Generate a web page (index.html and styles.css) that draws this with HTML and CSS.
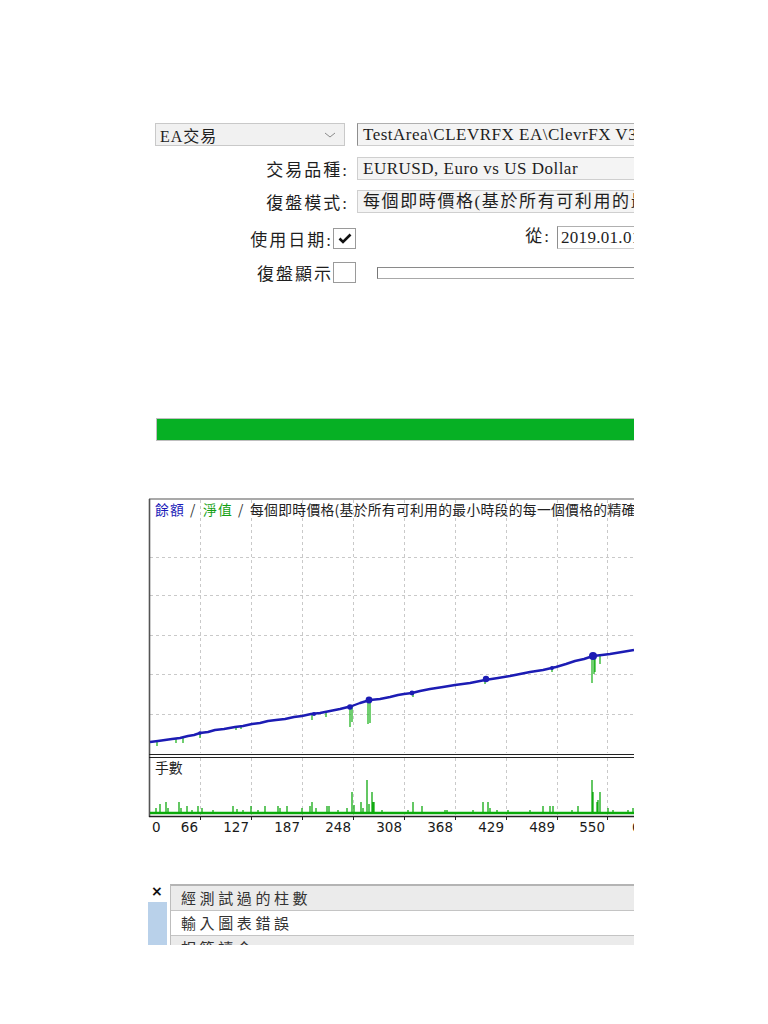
FILE: index.html
```html
<!DOCTYPE html>
<html lang="zh-Hant">
<head>
<meta charset="utf-8">
<title>策略測試</title>
<link rel="stylesheet" href="styles.css">
</head>
<body>
<div class="wrap">
  <div class="row r1">
    <div class="select"><span>EA交易</span>
      <svg class="chev" width="12" height="6" viewBox="0 0 12 6"><polyline points="1,1 6,5 11,1" fill="none" stroke="#8a8a8a" stroke-width="1"/></svg>
    </div>
    <div class="field sunken">TestArea\CLEVRFX EA\ClevrFX V3</div>
  </div>
  <div class="row r2">
    <div class="label">交易品種:</div>
    <div class="field">EURUSD, Euro vs US Dollar</div>
  </div>
  <div class="row r3">
    <div class="label">復盤模式:</div>
    <div class="field cjk">每個即時價格(基於所有可利用的最小時段的每一個價格的精確方法)</div>
  </div>
  <div class="row r4">
    <div class="label short">使用日期:</div>
    <div class="check"><svg width="14" height="11" viewBox="0 0 14 11"><polyline points="1.5,5.5 5,9 12.5,1.5" fill="none" stroke="#111" stroke-width="2.6"/></svg></div>
    <div class="from">從:</div>
    <div class="field date sunken">2019.01.01</div>
  </div>
  <div class="row r5">
    <div class="label short">復盤顯示</div>
    <div class="check"></div>
    <div class="track"></div>
  </div>

  <div class="greenbar"></div>

  <svg class="chart" width="486" height="340" viewBox="0 0 486 340">
    <g class="grid" stroke="#c9c9c9" stroke-width="1" stroke-dasharray="3,3">
      <path d="M52.5 2V255M103.5 2V255M154.5 2V255M205.5 2V255M256.5 2V255M307.5 2V255M358.5 2V255M409.5 2V255M459.5 2V255"/>
      <path d="M52.5 260V317M103.5 260V317M154.5 260V317M205.5 260V317M256.5 260V317M307.5 260V317M358.5 260V317M409.5 260V317M459.5 260V317"/>
      <path d="M2 59.5H486M2 97.5H486M2 137.5H486M2 176.5H486M2 216.5H486"/>
    </g>
    <line x1="1" y1="1" x2="486" y2="1" stroke="#8c8c8c" stroke-width="1.4"/>
    <line x1="1.5" y1="1" x2="1.5" y2="319" stroke="#555" stroke-width="1.6"/>
    <line x1="1" y1="256.5" x2="486" y2="256.5" stroke="#222" stroke-width="1.2"/>
    <line x1="1" y1="259.5" x2="486" y2="259.5" stroke="#222" stroke-width="1.2"/>

    <text y="17" class="legend"><tspan x="7" fill="#1c1cb8" class="wide">餘額</tspan><tspan x="42" fill="#333">/</tspan><tspan x="55" fill="#12a012" class="wide">淨值</tspan><tspan x="90" fill="#333">/</tspan><tspan x="102" fill="#222" class="main">每個即時價格(基於所有可利用的最小時段的每一個價格的精確方法)</tspan></text>

    <path d="M9 243V248M28 241V245M35 239V245M52 235V240M164 216V222M178 213V219M202 209V229M204 208V224M220 203V226M222 202V225M265 195V199M337 182V186M404 170V174M444 158V185M446 158V176M447 160V174M452 158V166M88 229V232M93 228V231" stroke="#25b525" stroke-width="1.3" fill="none"/>
    <polyline fill="none" stroke="#1c1cb4" stroke-width="2.4" stroke-linejoin="round"
      points="2,244 10,243 17,242 24,241 32,240 40,238 46,237 52,235 60,234 67,232 76,231 87,229 95,228 104,226 112,225 120,223 128,222 137,221 146,219 154,218 163,216 172,215 182,213 192,211 200,209 204,208 212,205 222,202 232,201 242,199 250,197 256,196 264,195 272,193 282,191 295,189 307,187 322,185 337,182 350,180 362,178 372,176 382,174 395,172 408,169 418,166 427,163 436,161 445,158 454,157 462,156 474,154 486,152"/>
    <g fill="#1c1cb4">
      <circle cx="202" cy="209" r="2.8"/>
      <circle cx="221" cy="202" r="3.4"/>
      <circle cx="264" cy="195" r="2.4"/>
      <circle cx="338" cy="181" r="3.2"/>
      <circle cx="445" cy="158" r="4"/>
      <circle cx="404" cy="170" r="2"/>
      <circle cx="166" cy="216" r="2"/>
      <circle cx="52" cy="235" r="1.8"/>
    </g>

    <text x="7" y="275" class="legend" fill="#222">手數</text>

    <path d="M8 315V310M12 315V306M18 315V304M20 315V310M31 315V304M33 315V310M39 315V308M44 315V312M50 315V308M54 315V310M65 315V312M85 315V308M89 315V311M95 315V312M103 315V308M110 315V312M117 315V308M130 315V308M132 315V310M139 315V308M154 315V310M162 315V308M164 315V304M168 315V310M179 315V308M181 315V308M190 315V312M199 315V310M204 315V294M206 315V307M213 315V304M215 315V310M219 315V282M221 315V306M224 315V294M225 315V304M226 315V304M234 315V312M260 315V312M265 315V304M274 315V308M297 315V312M299 315V312M325 315V312M335 315V304M340 315V304M342 315V310M349 315V312M360 315V312M382 315V312M395 315V308M402 315V308M405 315V308M424 315V312M430 315V308M444 315V282M445 315V294M449 315V304M450 315V302M452 315V294M460 315V310M465 315V312M480 315V312M485 315V310" stroke="#11aa11" stroke-width="1.3" fill="none"/>
    <line x1="2" y1="315" x2="486" y2="315" stroke="#0aaa0a" stroke-width="2.6"/>
    <line x1="1" y1="318.5" x2="486" y2="318.5" stroke="#222" stroke-width="1.4"/>
    <path d="M52.5 318V322M103.5 318V322M154.5 318V322M205.5 318V322M256.5 318V322M307.5 318V322M358.5 318V322M409.5 318V322M459.5 318V322" stroke="#222" stroke-width="1"/>

    <g class="axis" fill="#1a1a1a">
      <text x="4" y="334">0</text>
      <text x="50" y="334" text-anchor="end">66</text>
      <text x="101" y="334" text-anchor="end">127</text>
      <text x="152" y="334" text-anchor="end">187</text>
      <text x="203" y="334" text-anchor="end">248</text>
      <text x="254" y="334" text-anchor="end">308</text>
      <text x="305" y="334" text-anchor="end">368</text>
      <text x="356" y="334" text-anchor="end">429</text>
      <text x="407" y="334" text-anchor="end">489</text>
      <text x="457" y="334" text-anchor="end">550</text>
      <text x="484" y="334">611</text>
    </g>
  </svg>

  <div class="panel">
    <div class="side">
      <div class="close">×</div>
      <div class="strip"></div>
    </div>
    <div class="rows">
      <div class="item gray">經測試過的柱數</div>
      <div class="item">輸入圖表錯誤</div>
      <div class="item gray">相符讀令</div>
    </div>
  </div>
</div>
</body>
</html>
```

FILE: styles.css
```css
html, body {
  margin: 0;
  padding: 0;
  background: #ffffff;
}

.wrap {
  margin-left: 148px;
  width: 486px;
  overflow: hidden;
  padding-top: 123px;
  font-family: "Liberation Serif", "Noto Sans CJK TC", serif;
  color: #1e1e1e;
}

.row {
  display: flex;
  align-items: center;
  white-space: nowrap;
}

.r1 { height: 23px; }
.r2 { height: 23px; margin-top: 11px; }
.r3 { height: 23px; margin-top: 10px; }
.r4 { height: 24px; margin-top: 13px; }
.r5 { height: 21px; margin-top: 12px; }

.select {
  flex: none;
  margin-left: 7px;
  width: 190px;
  height: 23px;
  box-sizing: border-box;
  border: 1px solid #c9c9c9;
  background: #f1f1f1;
  display: flex;
  align-items: center;
  justify-content: space-between;
  padding: 0 8px 0 4px;
  font-size: 16px;
  letter-spacing: 1px;
}

.chev { display: block; }

.field {
  flex: none;
  margin-left: 8px;
  width: 320px;
  height: 23px;
  box-sizing: border-box;
  border: 1px solid #cfcfcf;
  background: #f4f4f4;
  padding-left: 5px;
  font-size: 17px;
  line-height: 21px;
  letter-spacing: 0.5px;
  overflow: hidden;
}

.field.cjk {
  letter-spacing: 1.6px;
}

.r1 .field { margin-left: 12px; }

.sunken {
  border-left-color: #8e8e8e;
  border-top-color: #b0b0b0;
}

.label {
  flex: none;
  width: 201px;
  text-align: right;
  font-size: 17px;
  letter-spacing: 2px;
}

.label.short {
  width: 185px;
}

.check {
  flex: none;
  width: 23px;
  height: 21px;
  box-sizing: border-box;
  border: 1px solid #9a9a9a;
  background: #ffffff;
  display: flex;
  align-items: center;
  justify-content: center;
}

.from {
  flex: none;
  width: 195px;
  text-align: right;
  font-size: 17px;
  letter-spacing: 2px;
  align-self: flex-start;
  line-height: 22px;
}

.field.date {
  margin-left: 6px;
  width: 90px;
  background: #ffffff;
  padding-left: 3px;
  font-size: 17px;
  letter-spacing: 0.3px;
  align-self: flex-start;
}

.track {
  flex: none;
  margin-left: 21px;
  width: 300px;
  height: 12px;
  box-sizing: border-box;
  border: 1px solid #a8a8a8;
  border-left-color: #777;
  border-top-color: #8a8a8a;
  background: #ffffff;
}

.greenbar {
  margin: 135px 0 0 8px;
  width: 490px;
  height: 23px;
  box-sizing: border-box;
  border: 1px solid #bfbfbf;
  background: #06b024;
}

.chart {
  display: block;
  margin-top: 57px;
}

.legend {
  font-family: "Noto Sans CJK TC", "DejaVu Sans", sans-serif;
  font-size: 13.8px;
}

.legend .wide {
  letter-spacing: 1.2px;
}

.legend .main {
  letter-spacing: 0.3px;
}

.axis text {
  font-family: "DejaVu Sans", sans-serif;
  font-size: 13.5px;
}

.panel {
  margin-top: 46px;
  height: 61px;
  overflow: hidden;
  display: flex;
  font-family: "Noto Sans CJK TC", "DejaVu Sans", sans-serif;
}

.side {
  flex: none;
  width: 22px;
  display: flex;
  flex-direction: column;
}

.close {
  height: 18px;
  padding-left: 3px;
  font-family: "DejaVu Sans", sans-serif;
  font-weight: bold;
  font-size: 14px;
  line-height: 14px;
  color: #111;
}

.strip {
  width: 19px;
  flex: 1;
  background: #b9d1ea;
}

.rows {
  flex: 1;
  border-left: 1px solid #bdbdbd;
  border-top: 2px solid #b4b4b4;
}

.item {
  height: 24px;
  border-bottom: 1px solid #c4c4c4;
  padding-left: 10px;
  font-size: 15px;
  line-height: 24px;
  letter-spacing: 3.6px;
  color: #333;
  white-space: nowrap;
}

.item.gray {
  background: #ebebeb;
}
```
